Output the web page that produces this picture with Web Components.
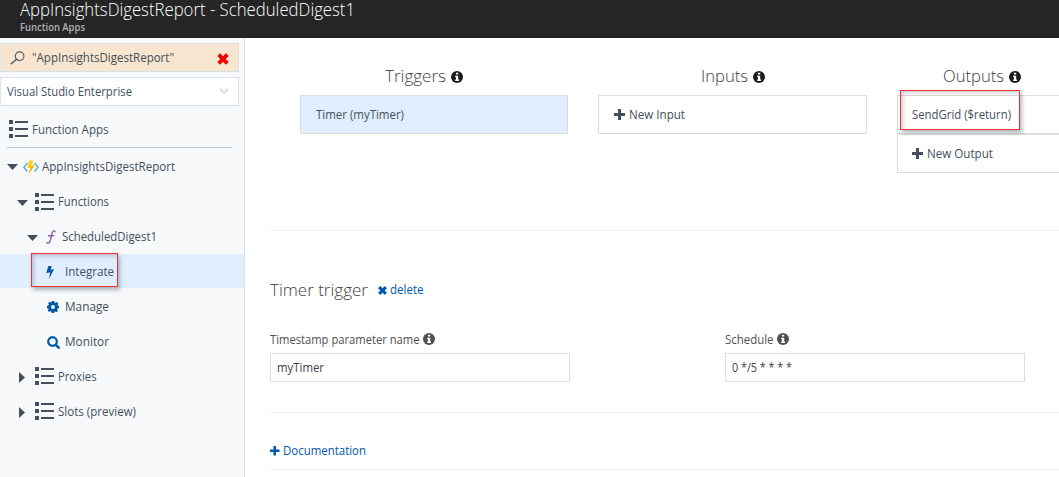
<!DOCTYPE html>
<html lang="en">
<head>
<meta charset="utf-8">
<title>Function Apps</title>
<style>
html,body{margin:0;height:100%;overflow:hidden;background:#fff}
</style>
</head>
<body>
<portal-app></portal-app>
<script>
function define(name, html, after) {
  const t = document.createElement('template');
  t.innerHTML = html;
  customElements.define(name, class extends HTMLElement {
    connectedCallback() {
      if (this.shadowRoot) return;
      this.attachShadow({ mode: 'open' }).append(t.content.cloneNode(true));
      if (after) after(this, this.shadowRoot);
    }
  });
}

const ICONS = {
  list: [19, 18, '<path fill="#454f5b" d="M0 0h4v4H0zM0 7h4v4H0zM0 14h4v4H0zM6 1h13v2H6zM6 8h13v2H6zM6 15h13v2H6z"/>'],
  down: [11, 6, '<path fill="#454f5b" d="M0 0h11L5.5 6z"/>'],
  right: [6, 11, '<path fill="#454f5b" d="M0 0v11L6 5.5z"/>'],
  app: [16, 15, '<path fill="none" stroke="#59b4d9" stroke-width="1.5" d="M4.5 3L.9 7.3l3.6 4.2M11.5 3l3.6 4.3-3.6 4.2"/><path fill="#fcd116" d="M6.2.5h4.3L8.7 5h3L5.5 14.5 7.3 8H4.2z"/><path fill="#ffab1a" d="M11.700 5L5.5 14.5 7.800 7.500z"/>'],
  fn: [10, 14, '<path fill="none" stroke="#8f5da8" stroke-width="1.35" stroke-linecap="round" d="M9.2 1.7C8.2.4 6.8.7 6.3 2.5L4.1 11c-.5 2-1.8 2.6-3.3 1.7M2.4 5.7h5.2"/>'],
  bolt: [8, 13, '<path fill="#0058ad" d="M2.3 0h3.5L4.7 3.8 8 3 3.1 13l1-6.7-3.9.9z"/>'],
  gear: [12, 12, '<path fill="#0058ad" fill-rule="evenodd" d="M4.700 0h2.600l.3 1.500 .9.400 1.400-.8 1.400 1.400-.8 1.300.4 1L12 4.800v2.400l-1.500.3-.4 1 .8 1.300-1.400 1.400-1.400-.8-.9.400L7.300 12H4.700l-.3-1.500-.9-.4-1.400.8L.7 9.500l.8-1.300-.4-1L0 7.200V4.800l1.500-.3.4-1L1.100 2.200 2.500.8l1.300.8.7-.300zM6 4A2 2 0 1 0 6 8 2 2 0 0 0 6 4z"/>'],
  search: [13, 13, '<circle cx="5.500" cy="5.500" r="4.300" fill="none" stroke="#0058ad" stroke-width="2.200"/><path stroke="#0058ad" stroke-width="2.500" stroke-linecap="round" d="M8.800 8.800l2.900 2.900"/>'],
  glass: [15, 14, '<circle cx="9.600" cy="5.200" r="4.300" fill="none" stroke="#505860" stroke-width="1.100"/><path stroke="#505860" stroke-width="1.300" d="M6.500 8.200L.7 13.300"/>'],
  clear: [12, 12, '<path stroke="#f00000" stroke-width="3.900" d="M1.700 1.700l8.600 8.600M10.300 1.700L1.700 10.300"/>'],
  cross: [9, 9, '<path stroke="#0058ad" stroke-width="3" d="M1.100 1.100l6.800 6.800M7.900 1.100L1.100 7.900"/>'],
  chevron: [10, 6, '<path fill="none" stroke="#d0dbe0" stroke-width="1.700" d="M.7.700L5 5 9.300.700"/>'],
  plus: [11, 11, '<path fill="currentColor" d="M4 0h3v4h4v3H7v4H4V7H0V4h4z"/>'],
  info: [12, 12, '<circle cx="6" cy="6" r="6" fill="currentColor"/><path fill="#fff" d="M5 1.800h2.200v1.700H5zM4.200 4.800h3v3.700h.8V10H4.200V8.500H5V6.200h-.8z"/>']
};

define('ui-icon', '<style>:host{display:inline-block;flex:none}svg{display:block}</style>', (el, root) => {
  const [w, h, body] = ICONS[el.getAttribute('name')];
  const width = +(el.getAttribute('size') || w);
  root.innerHTML += `<svg width="${width}" height="${h * width / w}" viewBox="0 0 ${w} ${h}">${body}</svg>`;
});

/* Label condensed horizontally so the text fills the given width. */
define('ui-text', '<style>:host{display:block;flex:none;white-space:pre}span{display:inline-block;transform-origin:0 50%}</style><span><slot></slot></span>', (el, root) => {
  const span = root.querySelector('span');
  const w = +el.getAttribute('w');
  el.style.width = w + 'px';
  span.style.transform = `scaleX(${w / span.getBoundingClientRect().width})`;
});

define('app-header', `<style>
:host{display:block;height:38px;background:#252525;padding-left:20px;box-sizing:border-box;overflow:hidden}
.t{font-size:17.5px;font-weight:300;color:#fff;line-height:18px;height:20px}
.t{overflow:visible}
.s{font-size:10.5px;font-weight:600;color:#b2b2b2;line-height:14px}
</style><ui-text class="t" w="335">AppInsightsDigestReport - ScheduledDigest1</ui-text><ui-text class="s" w="65">Function Apps</ui-text>`);

define('side-field', `<style>
:host{display:flex;align-items:center;box-sizing:border-box;width:239px;height:29px;border:1px solid #d6e1e6;border-left-color:#dfe6ea;background:#fff;padding:0 9px 0 6px}
:host([filled]){background:#f8e5cf;margin-bottom:5px}
::slotted([end]){margin-left:auto}
</style><slot></slot>`);

define('tree-row', `<style>
:host{display:flex;align-items:center;height:34px;margin-bottom:1px;box-sizing:border-box;padding-top:2px;padding-left:var(--indent,7px)}
:host([active]){background:#e0eeff}
</style><slot></slot>`);

define('side-bar', `<style>
:host{display:block;box-sizing:border-box;width:245px;flex:none;background:#f7f9fb;border-right:1px solid #d5e1e9;padding-top:5px}
.root{display:flex;align-items:center;height:41px;padding-left:9px;gap:4px}
hr{border:0;height:1px;background:#b9c8d2;margin:0 12px 1px 7px}
.mark{position:relative}
.mark mark-box{position:absolute;left:31px;top:-1px}
</style>
<side-field filled><ui-icon name="glass" style="margin-left:3px"></ui-icon><ui-text w="142" style="margin-left:7px">"AppInsightsDigestReport"</ui-text><ui-icon end name="clear" style="margin-top:2px"></ui-icon></side-field>
<side-field><ui-text w="125">Visual Studio Enterprise</ui-text><ui-icon end name="chevron" style="margin-top:-2px"></ui-icon></side-field>
<div class="root"><ui-icon name="list" style="margin-top:5px"></ui-icon><ui-text w="76.500" style="margin-top:6px">Function Apps</ui-text></div>
<hr>
<tree-row><ui-icon name="down"></ui-icon><ui-icon name="app" style="margin-left:5px"></ui-icon><ui-text w="133" style="margin-left:2.500px">AppInsightsDigestReport</ui-text></tree-row>
<tree-row style="--indent:17px"><ui-icon name="down" style="margin-top:2px"></ui-icon><ui-icon name="list" style="margin-left:7px"></ui-icon><ui-text w="51" style="margin-left:3.500px">Functions</ui-text></tree-row>
<tree-row style="--indent:27px"><ui-icon name="down" style="margin-top:2px"></ui-icon><ui-icon name="fn" style="margin-left:8px"></ui-icon><ui-text w="95" style="margin-left:5.500px">ScheduledDigest1</ui-text></tree-row>
<div class="mark"><tree-row active style="--indent:46px"><ui-icon name="bolt"></ui-icon><ui-text w="49" style="margin-left:10.500px">Integrate</ui-text></tree-row><mark-box style="width:87px;height:34px"></mark-box></div>
<tree-row style="--indent:47px"><ui-icon name="gear" style="margin-top:-1px"></ui-icon><ui-text w="44" style="margin-left:5.500px">Manage</ui-text></tree-row>
<tree-row style="--indent:47px"><ui-icon name="search"></ui-icon><ui-text w="44" style="margin-left:4.500px">Monitor</ui-text></tree-row>
<tree-row style="--indent:19px"><ui-icon name="right"></ui-icon><ui-icon name="list" style="margin-left:10px;margin-top:-2px"></ui-icon><ui-text w="38.500" style="margin-left:3.500px">Proxies</ui-text></tree-row>
<tree-row style="--indent:19px"><ui-icon name="right"></ui-icon><ui-icon name="list" style="margin-left:10px;margin-top:-2px"></ui-icon><ui-text w="78" style="margin-left:3.500px">Slots (preview)</ui-text></tree-row>`);

define('mark-box', `<style>:host{display:block;box-sizing:border-box;border:1px solid #f2302e;box-shadow:2px 3px 4px rgba(70,80,90,.4),inset 3px 3px 4px -1px rgba(70,80,90,.28)}</style>`);

define('binding-column', `<style>
:host{display:block;width:268.400px;flex:none}
.h{display:flex;justify-content:center;align-items:center;gap:5px;height:39px;color:#404040;font-size:17px;font-weight:300}
::slotted(ui-icon){color:#1d1d1d;margin-top:2px}
</style><div class="h"><slot name="head"></slot></div><slot></slot>`);

define('binding-card', `<style>
:host{display:flex;align-items:center;box-sizing:border-box;height:39px;border:1px solid #dcdcdc;padding-left:14.500px;gap:4px;background:#fff}
:host([active]){background:#e0eeff}
</style><slot></slot>`);

define('form-field', `<style>
:host{display:block;width:300px;flex:none}
.l{display:flex;align-items:center;height:26px;gap:3px;color:#505050}
.l ::slotted(ui-icon),::slotted(ui-icon){margin-top:-2px}
.i{display:flex;align-items:center;box-sizing:border-box;height:29px;border:1px solid #d5e1e6;padding-left:6px;color:#3a424b}
</style><div class="l"><slot name="label"></slot></div><div class="i"><slot></slot></div>`);

define('main-pane', `<style>
:host{display:block;flex:1;min-width:0;overflow:hidden}
.cols{display:flex;gap:30px;margin:18px 0 0 55px;height:174px}
.out{position:relative}
.out mark-box{position:absolute;left:3px;top:34px;width:120px;height:40px}
section{margin-left:25px;box-sizing:border-box;border-top:1px solid #eeeff0}
.title{display:flex;align-items:center;height:24px;padding-top:47px}
.big{font-size:17px;font-weight:300;color:#404040}
.fields{display:flex;gap:155px;margin-top:25px}
.link{color:#0058ad}
.doc{display:flex;align-items:center;gap:3px;height:56px;padding-top:0;border-bottom:1px solid #eeeff0;box-sizing:content-box}
.doc>*{margin-top:20px}
</style>
<div class="cols">
<binding-column><ui-text slot="head" w="61" style="margin-left:-20px">Triggers</ui-text><ui-icon slot="head" name="info"></ui-icon><binding-card active><ui-text w="88">Timer (myTimer)</ui-text></binding-card></binding-column>
<binding-column><ui-text slot="head" w="47">Inputs</ui-text><ui-icon slot="head" name="info"></ui-icon><binding-card><ui-icon name="plus"></ui-icon><ui-text w="56">New Input</ui-text></binding-card></binding-column>
<div class="out"><binding-column><ui-text slot="head" w="61" style="margin-left:-97px">Outputs</ui-text><ui-icon slot="head" name="info"></ui-icon><binding-card><ui-text w="99">SendGrid ($return)</ui-text></binding-card><binding-card><ui-icon name="plus"></ui-icon><ui-text w="66">New Output</ui-text></binding-card></binding-column><mark-box></mark-box></div>
</div>
<section style="height:182px"><div class="title"><ui-text class="big" w="98">Timer trigger</ui-text><ui-icon class="link" name="cross" style="margin-left:10px;margin-top:1px"></ui-icon><ui-text class="link" w="33.500" style="margin-left:3px">delete</ui-text></div>
<div class="fields"><form-field><ui-text slot="label" w="149.500">Timestamp parameter name</ui-text><ui-icon slot="label" name="info"></ui-icon><ui-text w="47">myTimer</ui-text></form-field><form-field><ui-text slot="label" w="48.500">Schedule</ui-text><ui-icon slot="label" name="info"></ui-icon><ui-text w="60">0 */5 * * * *</ui-text></form-field></div></section>
<section class="doc link"><ui-icon name="plus" size="9.500"></ui-icon><ui-text w="83">Documentation</ui-text></section>`);

define('portal-app', `<style>
:host{display:flex;flex-direction:column;width:1059px;height:477px;overflow:hidden;font:12.300px/18px "Open Sans","Noto Sans",sans-serif;color:#454f5b}
.body{display:flex;flex:1;min-height:0}
</style><app-header></app-header><div class="body"><side-bar></side-bar><main-pane></main-pane></div>`);
</script>
</body>
</html>
